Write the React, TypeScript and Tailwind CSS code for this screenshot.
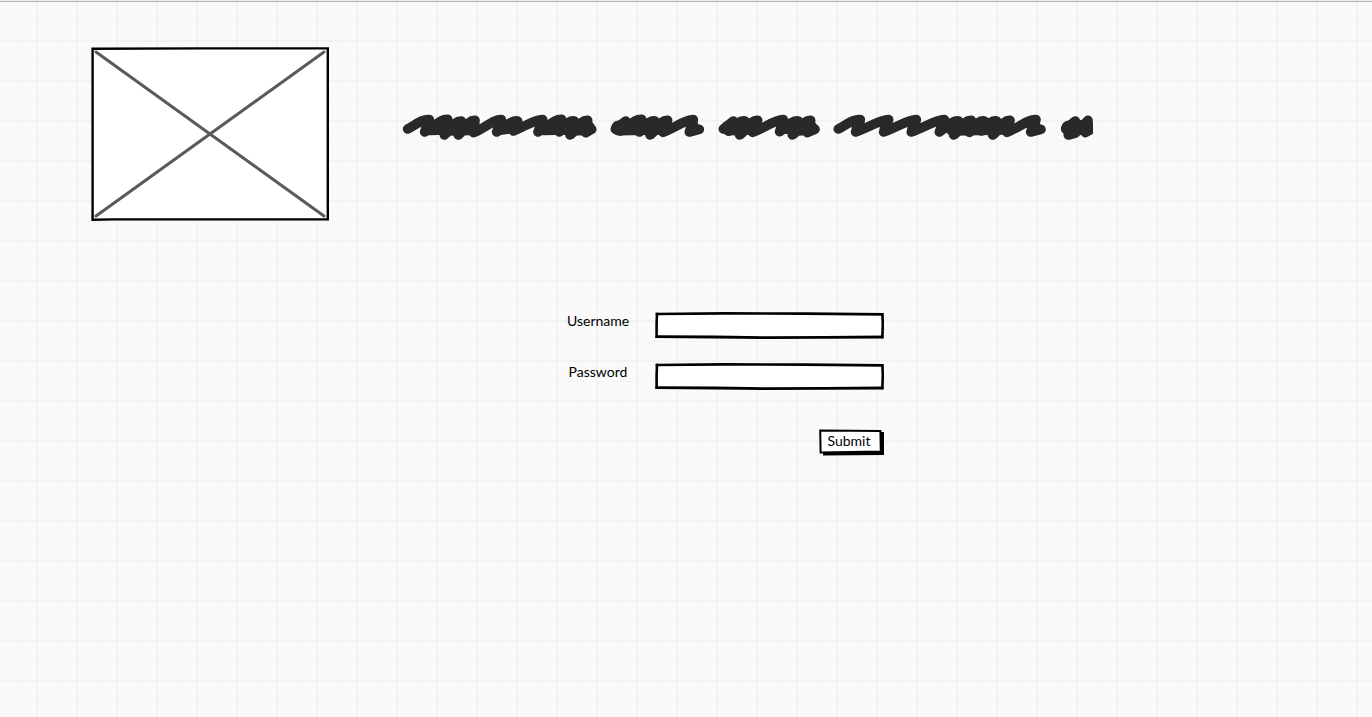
import type { InputHTMLAttributes } from "react";

const gridPaper =
  "bg-[#fafafa] bg-[linear-gradient(to_right,#f2f2f2_2px,transparent_2px),linear-gradient(to_bottom,#f2f2f2_2px,transparent_2px),linear-gradient(to_right,#f5f5f5_1px,transparent_1px),linear-gradient(to_bottom,#f5f5f5_1px,transparent_1px)] bg-[size:40px_40px] bg-[position:36px_0,0_39px,17px_0,0_20px]";

type Point = [number, number];

// Each word is a zigzag of pen turning points: start, top, bottom, top, bottom, ..., end.
const words: Point[][] = [
  [[17, 48], [82, 20], [68, 57], [137, 19], [127, 66], [178, 24], [169, 66], [219, 22], [215, 59], [298, 20], [284, 57], [347, 24], [334, 54], [422, 20], [408, 57], [479, 19], [472, 57], [517, 24], [504, 66], [557, 22], [551, 59], [569, 49]],
  [[640, 48], [671, 24], [655, 54], [719, 19], [712, 57], [759, 24], [744, 66], [797, 22], [783, 58], [874, 20], [862, 57], [892, 49]],
  [[964, 48], [994, 24], [980, 54], [1029, 24], [1013, 66], [1067, 22], [1052, 58], [1144, 20], [1133, 56], [1189, 24], [1171, 66], [1226, 22], [1216, 59], [1239, 49]],
  [[1309, 48], [1375, 20], [1361, 57], [1460, 20], [1445, 57], [1543, 20], [1528, 57], [1627, 20], [1612, 57], [1670, 24], [1655, 66], [1708, 22], [1702, 58], [1747, 24], [1739, 54], [1784, 24], [1772, 66], [1824, 22], [1815, 58], [1902, 20], [1886, 57], [1917, 49]],
  [[1991, 48], [2020, 24], [1999, 66], [2020, 60], [2058, 22], [2050, 59], [2067, 49]],
];

// Passages where the pen went back and forth until no paper shows through.
const denseInk =
  "M132 46 L208 44 M500 46 L556 44 M650 45 L780 43 M980 45 L1052 43 M1178 46 L1224 44 M1652 46 L1812 43 M2000 45 L2056 43";
const thickInk =
  "M76 38 L82 48 L130 46 M292 36 L298 46 L336 42 M418 36 L424 48 L500 46 M870 38 L874 46 M1142 38 L1146 44 L1180 44 M1370 36 L1368 46 M1454 36 L1452 46 M1537 36 L1535 46 M1622 38 L1660 43 M1897 38 L1895 46";

function penStroke([start, ...turns]: Point[]) {
  let [x, y] = start;
  let d = `M${x} ${y}`;
  for (const [nextX, nextY] of turns) {
    const rising = nextY < y && nextX - x > 40;
    d += rising
      ? ` C${x + (nextX - x) * 0.4} ${y - 14} ${nextX - 22} ${nextY - 2} ${nextX} ${nextY}`
      : ` L${nextX} ${nextY}`;
    x = nextX;
    y = nextY;
  }
  return d;
}

function ImagePlaceholder() {
  return (
    <svg
      role="img"
      aria-label="Image placeholder"
      className="h-[174px] w-[238px] shrink-0"
      viewBox="0 0 238 174"
      fill="none"
    >
      <path d="M1.8 2 L237 1.2 L237 172.4 L1.8 172.6 Z" fill="#fff" />
      <path d="M5 5 L233 169 M233 5 L5 169" stroke="#5a5a5a" strokeWidth="3" strokeLinecap="round" />
      <path
        d="M1.6 1.8 L112 1.4 L236.8 1.4 L236.8 172.4 L22 172.4 L1.6 172.8 Z"
        stroke="#000"
        strokeWidth="2.4"
      />
    </svg>
  );
}

function ScribbleTitle() {
  return (
    <svg
      role="img"
      aria-label="Title placeholder"
      className="h-7 w-[691px] shrink-0"
      viewBox="0 0 2073 84"
      fill="none"
      stroke="#292929"
      strokeWidth="29"
      strokeLinecap="round"
      strokeLinejoin="round"
    >
      {words.map((word) => (
        <path key={word[0][0]} d={penStroke(word)} />
      ))}
      <path d={thickInk} strokeWidth="38" />
      <path d={denseInk} strokeWidth="45" />
    </svg>
  );
}

type FieldProps = InputHTMLAttributes<HTMLInputElement> & { id: string; label: string };

function Field({ id, label, ...input }: FieldProps) {
  return (
    <div className="flex items-start justify-between">
      <label htmlFor={id} className="w-[62px] text-center leading-[18px]">
        {label}
      </label>
      <div className="relative h-[27px] w-[229px]">
        <svg
          aria-hidden="true"
          className="absolute inset-0 h-full w-full"
          viewBox="0 0 229 27"
          preserveAspectRatio="none"
          fill="none"
          stroke="#000"
          strokeLinecap="square"
        >
          <path d="M2 2 L227 2 L228 25 L2 25 Z" fill="#fff" stroke="none" />
          <path d="M2 2 L70 1.4 L150 1.6 L227 2.4" strokeWidth="2.6" />
          <path d="M2 2 L1.6 12 L1.6 24.6" strokeWidth="2.6" />
          <path d="M227.4 2.4 L227.8 12 L227.4 25" strokeWidth="2.6" />
          <path d="M2 24.6 L60 25 L110 25.6 L170 25.4 L227 25" strokeWidth="2.8" />
        </svg>
        <input
          id={id}
          name={id}
          className="relative block h-full w-full bg-transparent px-2 outline-none"
          {...input}
        />
      </div>
    </div>
  );
}

function SubmitButton() {
  return (
    <button type="submit" className="relative h-[27px] w-[66px] cursor-pointer pr-1 pb-1 text-center leading-5">
      <svg
        aria-hidden="true"
        className="absolute inset-0 h-full w-full"
        viewBox="0 0 66 27"
        preserveAspectRatio="none"
      >
        <path d="M5 4 L66 3 L66 26 L5 26.6 Z" fill="#000" />
        <path d="M2.2 1.6 L62.4 2 L62.8 22.6 L2.6 23.4 Z" fill="#fff" stroke="#000" strokeWidth="2" />
      </svg>
      <span className="relative">Submit</span>
    </button>
  );
}

export default function App() {
  return (
    <div
      className={`min-h-screen border-t border-[#ececec] font-['Lato','Open_Sans',sans-serif] text-sm text-black ${gridPaper}`}
    >
      <div className="border-t border-[#b5b5b5]" />
      <header className="flex items-center gap-[73px] pt-[45px] pl-[91px]">
        <ImagePlaceholder />
        <div className="pb-[14px]">
          <ScribbleTitle />
        </div>
      </header>
      <main className="pt-[91px] pl-[567px]">
        <form
          className="flex w-[317px] flex-col gap-6"
          onSubmit={(event) => event.preventDefault()}
        >
          <Field id="username" label="Username" type="text" autoComplete="username" />
          <Field id="password" label="Password" type="password" autoComplete="current-password" />
          <div className="flex justify-end pt-[15px]">
            <SubmitButton />
          </div>
        </form>
      </main>
    </div>
  );
}
